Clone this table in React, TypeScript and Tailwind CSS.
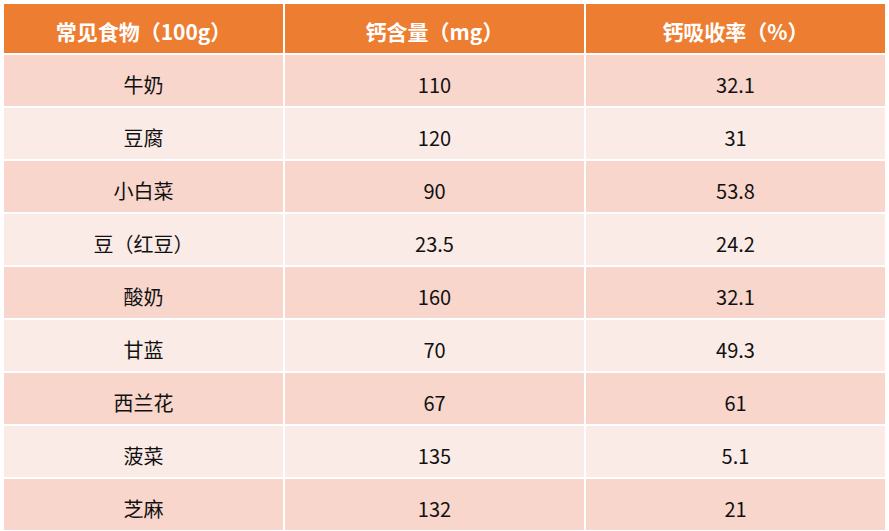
import React from 'react';

const rows: [string, string, string][] = [
  ['牛奶', '110', '32.1'],
  ['豆腐', '120', '31'],
  ['小白菜', '90', '53.8'],
  ['豆（红豆）', '23.5', '24.2'],
  ['酸奶', '160', '32.1'],
  ['甘蓝', '70', '49.3'],
  ['西兰花', '67', '61'],
  ['菠菜', '135', '5.1'],
  ['芝麻', '132', '21'],
];

const headers = ['常见食物（100g）', '钙含量（mg）', '钙吸收率（%）'];

const App: React.FC = () => {
  return (
    <div
      className="w-[889px] h-[531px] bg-white pt-[4px] px-[4px] overflow-hidden"
      style={{ fontFamily: '"Noto Sans CJK SC", "Noto Sans", sans-serif' }}
    >
      <div className="grid grid-cols-[279px_299px_299px] gap-[2px]">
        {headers.map((h) => (
          <div
            key={h}
            className="h-[49px] bg-[#ED7D31] text-white font-bold text-[21px] flex items-center justify-center pt-[6px]"
          >
            {h}
          </div>
        ))}
        {rows.map((row, i) =>
          row.map((cell, j) => (
            <div
              key={`${i}-${j}`}
              className={`h-[51px] flex items-center justify-center pt-[9px] text-[20px] text-[#111] ${
                i % 2 === 0 ? 'bg-[#F8D6CC]' : 'bg-[#FBEBE7]'
              }`}
            >
              {cell}
            </div>
          ))
        )}
      </div>
    </div>
  );
};

export default App;
